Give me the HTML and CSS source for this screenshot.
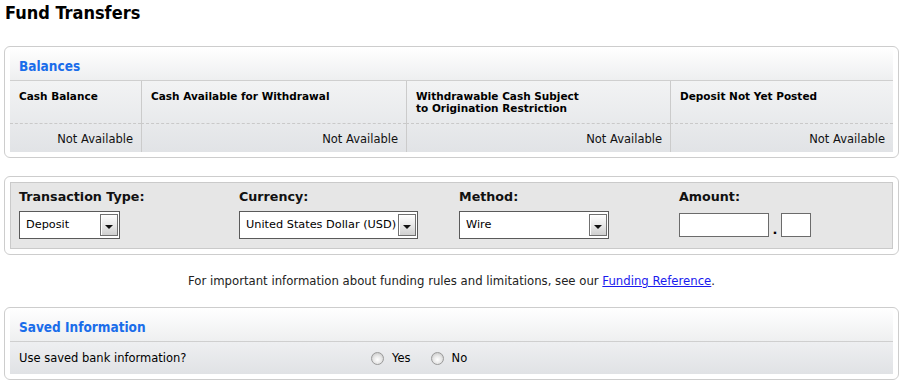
FILE: index.html
```html
<!DOCTYPE html>
<html lang="en">
<head>
<meta charset="UTF-8">
<meta name="viewport" content="width=device-width, initial-scale=1.0">
<title>Fund Transfers</title>
<link rel="stylesheet" href="styles.css">
</head>
<body>
<h1 class="page-title">Fund Transfers</h1>

<div class="panel">
    <div class="panel-head">Balances</div>
    <div class="balances">
        <div class="bal-th">Cash Balance</div>
        <div class="bal-th">Cash Available for Withdrawal</div>
        <div class="bal-th">Withdrawable Cash Subject<br>to Origination Restriction</div>
        <div class="bal-th">Deposit Not Yet Posted</div>
        <div class="bal-td">Not Available</div>
        <div class="bal-td">Not Available</div>
        <div class="bal-td">Not Available</div>
        <div class="bal-td">Not Available</div>
    </div>
</div>

<div class="panel panel-form">
    <div class="form-box">
        <div class="field">
            <label class="field-label">Transaction Type:</label>
            <div class="select w-type">
                <span class="select-val">Deposit</span>
                <span class="select-btn"></span>
            </div>
        </div>
        <div class="field">
            <label class="field-label">Currency:</label>
            <div class="select w-currency">
                <span class="select-val">United States Dollar (USD)</span>
                <span class="select-btn"></span>
            </div>
        </div>
        <div class="field">
            <label class="field-label">Method:</label>
            <div class="select w-method">
                <span class="select-val">Wire</span>
                <span class="select-btn"></span>
            </div>
        </div>
        <div class="field">
            <label class="field-label">Amount:</label>
            <div class="amount">
                <input type="text" class="amt-whole">
                <span class="amt-dot">.</span>
                <input type="text" class="amt-cents">
            </div>
        </div>
    </div>
</div>

<p class="info">For important information about funding rules and limitations, see our <a href="#">Funding Reference</a>.</p>

<div class="panel panel-saved">
    <div class="panel-head">Saved Information</div>
    <div class="saved-row">
        <span class="saved-q">Use saved bank information?</span>
        <span class="radios">
            <label class="radio"><input type="radio" name="saved"> Yes</label>
            <label class="radio"><input type="radio" name="saved"> No</label>
        </span>
    </div>
</div>
</body>
</html>
```

FILE: styles.css
```css
body {
  margin: 0;
  padding: 0 11px 0 4px;
  font-family: "DejaVu Sans", sans-serif;
  color: #000;
  background: #fff;
}

.page-title {
  margin: 0 0 0 1px;
  padding-top: 2px;
  font-family: "DejaVu Sans Condensed", "DejaVu Sans", sans-serif;
  font-size: 18px;
  line-height: 22px;
  font-weight: bold;
}

.panel {
  margin-top: 22px;
  border: 1px solid #cdcdcd;
  border-radius: 6px;
  padding: 0 5px 5px 5px;
}

.panel-head {
  height: 34px;
  box-sizing: border-box;
  padding: 11px 0 0 9px;
  border-bottom: 1px solid #cfcfcf;
  background: linear-gradient(#ffffff, #eeeff0);
  color: #1a6dea;
  font-family: "DejaVu Sans Condensed", "DejaVu Sans", sans-serif;
  font-size: 13.5px;
  font-weight: bold;
  line-height: 17px;
}

/* balances table */
.balances {
  display: grid;
  grid-template-columns: 131px 265px 264px 1fr;
  background: linear-gradient(#f2f3f4, #e1e3e6);
}

.bal-th {
  height: 43px;
  box-sizing: border-box;
  padding: 9px 9px 0 9px;
  font-size: 10.5px;
  font-weight: bold;
  line-height: 12px;
  border-bottom: 1px dashed #c9c9c9;
}

.bal-td {
  height: 28px;
  box-sizing: border-box;
  padding: 8px 8px 0 8px;
  font-size: 11.5px;
  line-height: 14px;
  text-align: right;
  color: #111;
}

.bal-th:nth-child(4n+2),
.bal-th:nth-child(4n+3),
.bal-th:nth-child(4n+4),
.bal-td:nth-child(4n+2),
.bal-td:nth-child(4n+3),
.bal-td:nth-child(4n+4) {
  border-left: 1px solid #cbcbcb;
}

/* form */
.panel-form {
  margin-top: 18px;
  padding-top: 5px;
}

.form-box {
  display: grid;
  grid-template-columns: 220px 220px 220px 1fr;
  background: #e6e6e6;
  border: 1px solid #cacaca;
  padding: 6px 8px 9px 8px;
}

.field-label {
  display: block;
  font-size: 12.7px;
  font-weight: bold;
  line-height: 16px;
  color: #111;
  margin-bottom: 6px;
}

.select {
  display: flex;
  align-items: center;
  height: 28px;
  box-sizing: border-box;
  border: 1px solid #5a5a5a;
  background: #fff;
  padding: 0 1px 0 6px;
}

.select-val {
  flex: 1;
  font-size: 11.3px;
  white-space: nowrap;
  overflow: hidden;
  padding-bottom: 1px;
}

.select-btn {
  position: relative;
  width: 18px;
  height: 22px;
  box-sizing: border-box;
  border: 1px solid #707070;
  background: linear-gradient(#ffffff, #e4e4e4 60%, #cfcfcf);
  box-shadow: inset 1px 1px 0 #fff;
}

.select-btn::after {
  content: "";
  position: absolute;
  left: 4px;
  top: 10px;
  border-left: 4px solid transparent;
  border-right: 4px solid transparent;
  border-top: 4px solid #111;
}

.w-type { width: 101px; }
.w-currency { width: 179px; }
.w-method { width: 150px; }

.amount {
  display: flex;
  align-items: center;
  height: 28px;
}

.amount input {
  height: 24px;
  box-sizing: border-box;
  border: 1px solid #6b6b6b;
  background: #fff;
  margin: 0;
  padding: 0 3px;
}

.amt-whole { width: 90px; }
.amt-cents { width: 30px; }

.amt-dot {
  width: 12px;
  text-align: center;
  font-weight: bold;
  font-size: 13px;
  padding-top: 8px;
}

/* info line */
.info {
  margin: 19px 0 0 0;
  text-align: center;
  font-size: 11.7px;
  line-height: 14px;
  color: #222;
}

.info a {
  color: #1a1aee;
}

/* saved info */
.panel-saved {
  margin-top: 19px;
}

.saved-row {
  display: grid;
  grid-template-columns: 352px 1fr;
  align-items: center;
  height: 32px;
  box-sizing: border-box;
  padding: 0 0 0 9px;
  background: linear-gradient(#eeeff1, #e0e2e5);
  font-size: 11.5px;
  line-height: 15px;
}

.radios {
  display: flex;
  gap: 20px;
}

.radio {
  display: flex;
  align-items: center;
  gap: 8px;
}

.radio input {
  appearance: none;
  -webkit-appearance: none;
  width: 13px;
  height: 13px;
  margin: 0;
  border: 1px solid #9a9a9a;
  border-radius: 50%;
  background: radial-gradient(circle at 50% 60%, #ffffff 0, #e8e8e8 45%, #bdbdbd 100%);
}
```
